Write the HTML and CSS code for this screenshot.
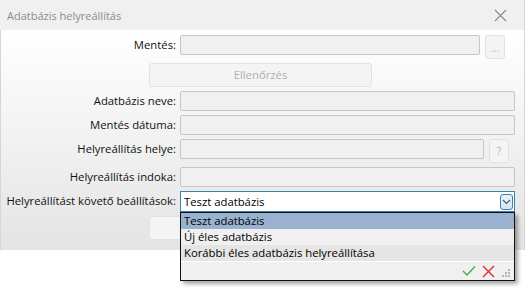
FILE: index.html
```html
<!DOCTYPE html>
<html lang="hu">
<head>
    <meta charset="UTF-8">
    <meta name="viewport" content="width=device-width, initial-scale=1.0">
    <title>Adatbázis helyreállítás</title>
    <link rel="stylesheet" href="styles.css">
</head>
<body>
    <div class="dialog">
        <div class="titlebar">
            <span class="title">Adatbázis helyreállítás</span>
            <svg class="close" width="13" height="13" viewBox="0 0 13 13">
                <path d="M1 1 L12 12 M12 1 L1 12" stroke="#8a8a8a" stroke-width="1.1" fill="none"/>
            </svg>
        </div>
        <div class="body">
            <div class="row">
                <label>Mentés:</label>
                <div class="field">
                    <div class="input short1"></div>
                    <div class="btn small dots">...</div>
                </div>
            </div>
            <div class="row">
                <span></span>
                <div class="btn wide">Ellenőrzés</div>
            </div>
            <div class="row">
                <label>Adatbázis neve:</label>
                <div class="input"></div>
            </div>
            <div class="row">
                <label>Mentés dátuma:</label>
                <div class="input"></div>
            </div>
            <div class="row">
                <label>Helyreállítás helye:</label>
                <div class="field">
                    <div class="input short2"></div>
                    <div class="btn small">?</div>
                </div>
            </div>
            <div class="row">
                <label>Helyreállítás indoka:</label>
                <div class="input"></div>
            </div>
            <div class="row">
                <label>Helyreállítást követő beállítások:</label>
                <div class="combo-wrap">
                    <div class="combo">
                        <span>Teszt adatbázis</span>
                        <div class="combo-btn">
                            <svg width="9" height="6" viewBox="0 0 9 6">
                                <path d="M1 1 L4.5 4.5 L8 1" stroke="#4a5a6a" stroke-width="1.1" fill="none"/>
                            </svg>
                        </div>
                    </div>
                    <div class="popup">
                        <div class="item selected">Teszt adatbázis</div>
                        <div class="item">Új éles adatbázis</div>
                        <div class="item alt">Korábbi éles adatbázis helyreállítása</div>
                        <div class="popup-footer">
                            <svg width="14" height="12" viewBox="0 0 14 12">
                                <path d="M1 6 L5 10 L13 1.5" stroke="#3fae5a" stroke-width="1.4" fill="none"/>
                            </svg>
                            <svg width="13" height="13" viewBox="0 0 13 13">
                                <path d="M1 1 L12 12 M12 1 L1 12" stroke="#e0302e" stroke-width="1.4" fill="none"/>
                            </svg>
                            <svg class="grip" width="10" height="10" viewBox="0 0 10 10">
                                <rect x="7" y="1" width="2" height="2" fill="#b5b5b5"/>
                                <rect x="4" y="4" width="2" height="2" fill="#b5b5b5"/>
                                <rect x="7" y="4" width="2" height="2" fill="#b5b5b5"/>
                                <rect x="1" y="7" width="2" height="2" fill="#b5b5b5"/>
                                <rect x="4" y="7" width="2" height="2" fill="#b5b5b5"/>
                                <rect x="7" y="7" width="2" height="2" fill="#b5b5b5"/>
                            </svg>
                        </div>
                    </div>
                </div>
            </div>
            <div class="row">
                <span></span>
                <div class="btn wide">Helyreállítás</div>
            </div>
        </div>
    </div>
</body>
</html>
```

FILE: styles.css
```css
html, body {
    height: 100%;
}
body {
    margin: 0;
    min-height: 296px;
    background-color: #fff;
    font-family: "Open Sans", "Noto Sans", sans-serif;
    font-size: 11.3px;
    color: #111;
}
.dialog {
    width: 525px;
    height: 250px;
    border-right: 1px solid #d4d4d4;
    border-bottom: 1px solid #cfcfcf;
    box-sizing: border-box;
}
.titlebar {
    height: 30px;
    background-color: #f0f0f0;
    display: flex;
    align-items: center;
    justify-content: space-between;
    padding: 0 17px 0 7px;
}
.title {
    color: #8c8c8c;
    font-size: 11px;
}
.body {
    height: 220px;
    box-sizing: border-box;
    padding: 5px 9px 0 0;
    border-left: 1px solid #d6d6d6;
    background: linear-gradient(#ffffff, #e4e4e4);
    display: flex;
    flex-direction: column;
    gap: 4px;
}
.row {
    display: grid;
    grid-template-columns: 175px 1fr;
    column-gap: 4px;
    align-items: start;
}
.row label {
    text-align: right;
    line-height: 20px;
}
.field {
    display: flex;
    gap: 5px;
}
.input {
    height: 20px;
    box-sizing: border-box;
    background-color: #f0f0f0;
    border: 1px solid #c6c6c6;
    border-radius: 2px;
}
.short1 {
    width: 300px;
}
.short2 {
    width: 304px;
}
.btn {
    height: 24px;
    box-sizing: border-box;
    background-color: #f4f4f4;
    border: 1px solid #e2e2e2;
    border-radius: 3px;
    color: #b0b0b0;
    text-align: center;
    line-height: 22px;
}
.small {
    width: 20px;
}
.dots {
    line-height: 24px;
    font-size: 11px;
    color: #bcbcbc;
}
.wide {
    width: 223px;
    margin-left: -31px;
}
.combo-wrap {
    position: relative;
}
.combo {
    height: 21px;
    box-sizing: border-box;
    background-color: #fff;
    border: 1px solid #3c7fb1;
    display: flex;
    align-items: center;
    justify-content: space-between;
    padding: 0 1px 0 3px;
    color: #000;
}
.combo-btn {
    width: 13px;
    height: 16px;
    box-sizing: border-box;
    border: 1px solid #3c7fb1;
    border-radius: 3px;
    background: linear-gradient(#eaf3fb, #d3e5f6);
    display: flex;
    align-items: center;
    justify-content: center;
}
.popup {
    position: absolute;
    top: 21px;
    left: 0;
    right: 0;
    z-index: 5;
    background-color: #f0f0f0;
    border: 1px solid #111;
    box-shadow: 3px 3px 4px rgba(0, 0, 0, 0.35);
    color: #000;
}
.item {
    height: 16px;
    line-height: 16px;
    padding-left: 3px;
    white-space: nowrap;
}
.item.selected {
    background-color: #98b2d0;
}
.item.alt {
    background-color: #e5e5e5;
    border-bottom: 1px solid #fff;
}
.popup-footer {
    height: 18px;
    display: flex;
    align-items: center;
    justify-content: flex-end;
    gap: 6px;
    padding-right: 3px;
}
.grip {
    margin-top: 4px;
}
```
